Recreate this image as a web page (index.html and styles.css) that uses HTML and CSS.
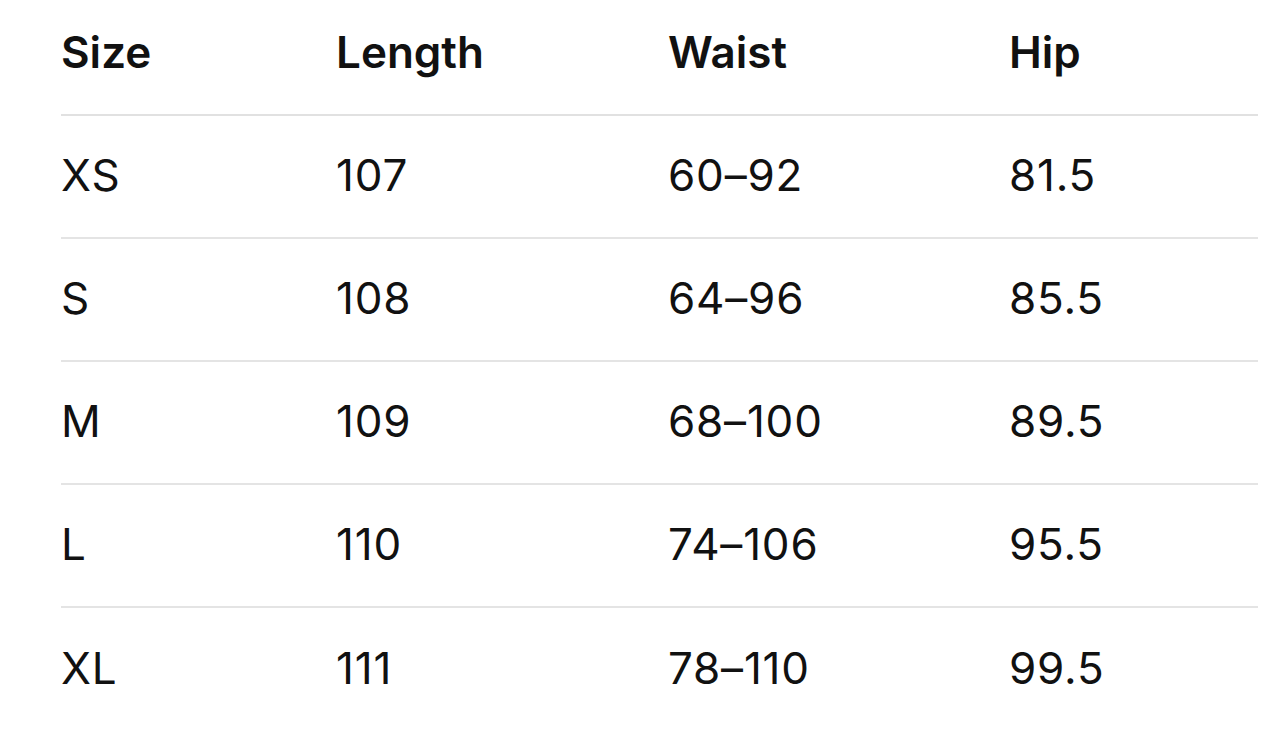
FILE: index.html
```html
<!DOCTYPE html>
<html lang="en">
<head>
<meta charset="utf-8">
<title>Size chart</title>
<link rel="stylesheet" href="styles.css">
</head>
<body>
<div class="chart">
  <div class="row head">
    <div class="cell">Size</div>
    <div class="cell">Length</div>
    <div class="cell">Waist</div>
    <div class="cell">Hip</div>
  </div>
  <div class="row">
    <div class="cell">XS</div>
    <div class="cell">107</div>
    <div class="cell">60–92</div>
    <div class="cell">81.5</div>
  </div>
  <div class="row">
    <div class="cell">S</div>
    <div class="cell">108</div>
    <div class="cell">64–96</div>
    <div class="cell">85.5</div>
  </div>
  <div class="row">
    <div class="cell">M</div>
    <div class="cell">109</div>
    <div class="cell">68–100</div>
    <div class="cell">89.5</div>
  </div>
  <div class="row">
    <div class="cell">L</div>
    <div class="cell">110</div>
    <div class="cell">74–106</div>
    <div class="cell">95.5</div>
  </div>
  <div class="row">
    <div class="cell">XL</div>
    <div class="cell">111</div>
    <div class="cell">78–110</div>
    <div class="cell">99.5</div>
  </div>
</div>
</body>
</html>
```

FILE: styles.css
```css
html, body {
  margin: 0;
  padding: 0;
  background: #ffffff;
}
body {
  font-family: Inter, "Noto Sans", "Liberation Sans", sans-serif;
  color: #111111;
  font-size: 44px;
}
.chart {
  padding: 0 16px 0 61px;
}
.row {
  display: grid;
  grid-template-columns: 275px 332px 341px 1fr;
  align-items: center;
  box-sizing: border-box;
  height: 123px;
  padding-bottom: 4px;
  border-bottom: 2px solid #e4e4e4;
  letter-spacing: 0.8px;
}
.row:last-child {
  border-bottom: none;
}
.row.head {
  height: 116px;
  padding-bottom: 10px;
  border-bottom: 2px solid #e1e1e1;
  font-weight: 600;
  letter-spacing: 0;
}
.cell {
  white-space: nowrap;
}
```
